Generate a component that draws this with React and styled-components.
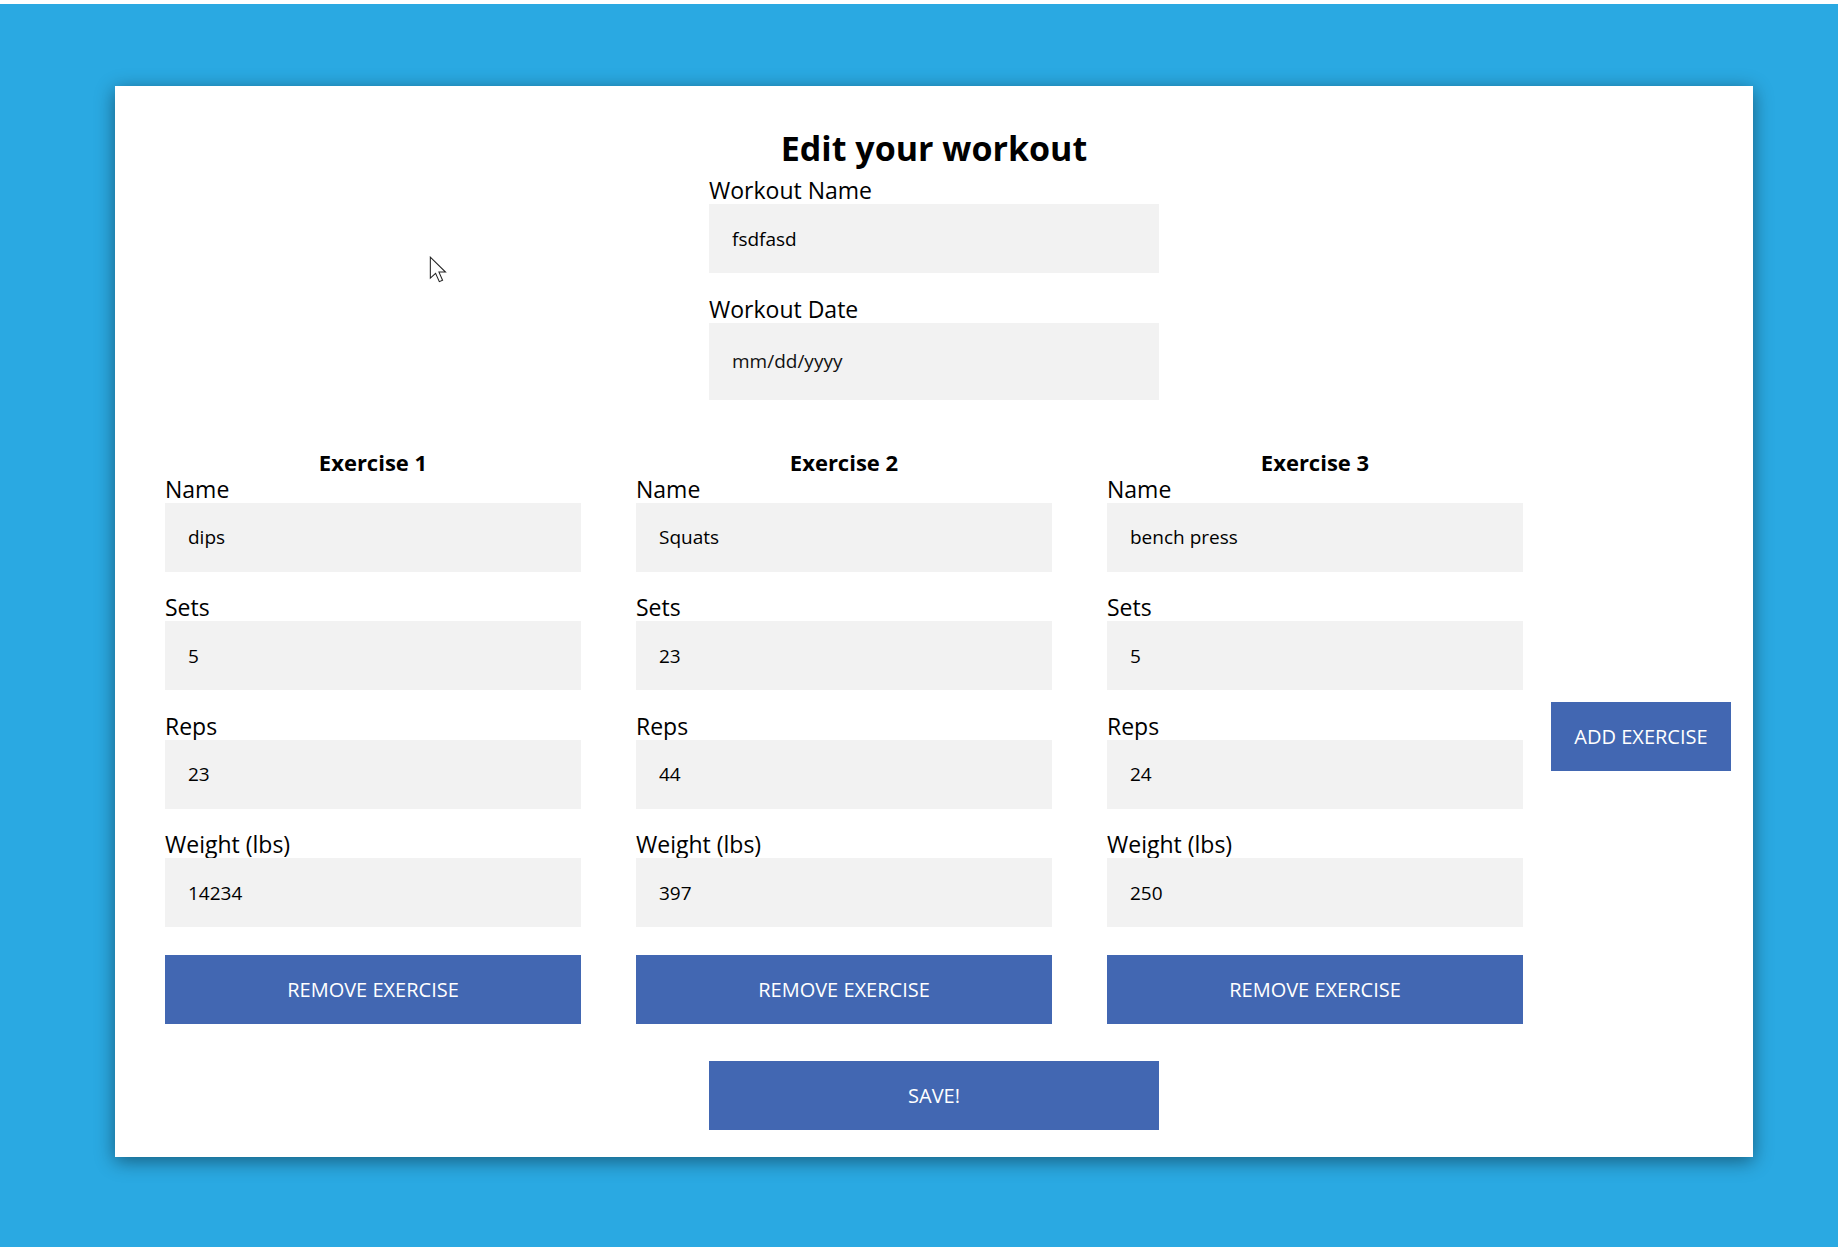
import React from 'react'
import styled, { createGlobalStyle } from 'styled-components'

const GlobalStyle = createGlobalStyle`
  html, body {
    margin: 0;
    padding: 0;
    background: #ffffff;
  }
  body {
    font-family: 'Open Sans', 'Noto Sans', 'Liberation Sans', sans-serif;
    color: #000;
  }
  * {
    box-sizing: border-box;
  }
`

const Backdrop = styled.div`
  margin-top: 4px;
  min-height: 1243px;
  background: #2aa9e2;
  padding: 82px 85px 60px 115px;
`

const Card = styled.div`
  position: relative;
  background: #fff;
  box-shadow: 0 4px 18px rgba(0, 0, 0, 0.45);
  padding: 39px 0 27px;
  display: flex;
  flex-direction: column;
  align-items: center;
`

const Title = styled.h1`
  margin: 0;
  font-size: 34px;
  line-height: 47px;
  font-weight: 700;
  text-align: center;
`

const WorkoutForm = styled.div`
  width: 450px;
  margin-top: 4px;
  display: flex;
  flex-direction: column;
`

const Field = styled.label`
  display: flex;
  flex-direction: column;
  & + & {
    margin-top: 21.5px;
  }
`

const LabelText = styled.span`
  font-size: 23px;
  line-height: 28px;
  font-weight: 400;
`

const TextInput = styled.input`
  height: ${p => p.$tall ? 77 : 69}px;
  width: 100%;
  border: none;
  outline: none;
  background: #f2f2f2;
  padding: 0 23px;
  font-family: inherit;
  font-size: 19px;
  color: #000;
  &::placeholder {
    color: #111;
    opacity: 1;
  }
`

const ExerciseRow = styled.div`
  align-self: stretch;
  margin-top: 50px;
  padding: 0 22px 0 50px;
  display: flex;
  align-items: center;
`

const ExerciseGrid = styled.div`
  display: grid;
  grid-template-columns: repeat(3, 416px);
  column-gap: 55px;
`

const ExerciseColumn = styled.div`
  display: flex;
  flex-direction: column;
`

const ExerciseTitle = styled.h3`
  margin: 0;
  font-size: 22px;
  line-height: 25px;
  font-weight: 700;
  text-align: center;
`

const Button = styled.button`
  height: 69px;
  border: none;
  background: #4267b2;
  color: #fff;
  font-family: inherit;
  font-size: 20px;
  text-transform: uppercase;
  cursor: pointer;
  width: ${p => p.$width || '100%'};
  padding: 0;
  white-space: nowrap;
`

const RemoveButton = styled(Button)`
  margin-top: 28px;
`

const AddButton = styled(Button)`
  margin-left: 28px;
  flex: none;
`

const SaveButton = styled(Button)`
  margin-top: 37px;
`

const Pointer = styled.svg`
  position: absolute;
  left: 314px;
  top: 170px;
`

const exercises = [
  { name: 'dips', sets: 5, reps: 23, weight: 14234 },
  { name: 'Squats', sets: 23, reps: 44, weight: 397 },
  { name: 'bench press', sets: 5, reps: 24, weight: 250 }
]

const Exercise = ({ index, ex }) => (
  <ExerciseColumn>
    <ExerciseTitle>Exercise {index + 1}</ExerciseTitle>
    <Field>
      <LabelText>Name</LabelText>
      <TextInput defaultValue={ex.name} />
    </Field>
    <Field>
      <LabelText>Sets</LabelText>
      <TextInput defaultValue={ex.sets} />
    </Field>
    <Field>
      <LabelText>Reps</LabelText>
      <TextInput defaultValue={ex.reps} />
    </Field>
    <Field>
      <LabelText>Weight (lbs)</LabelText>
      <TextInput defaultValue={ex.weight} />
    </Field>
    <RemoveButton>Remove Exercise</RemoveButton>
  </ExerciseColumn>
)

export default function App() {
  return (
    <>
      <GlobalStyle />
      <Backdrop>
        <Card>
          <Title>Edit your workout</Title>
          <WorkoutForm>
            <Field>
              <LabelText>Workout Name</LabelText>
              <TextInput defaultValue="fsdfasd" />
            </Field>
            <Field>
              <LabelText>Workout Date</LabelText>
              <TextInput $tall placeholder="mm/dd/yyyy" />
            </Field>
          </WorkoutForm>
          <ExerciseRow>
            <ExerciseGrid>
              {exercises.map((ex, i) => (
                <Exercise key={i} index={i} ex={ex} />
              ))}
            </ExerciseGrid>
            <AddButton $width="180px">Add Exercise</AddButton>
          </ExerciseRow>
          <SaveButton $width="450px">Save!</SaveButton>
          <Pointer width="19" height="28" viewBox="0 0 16 24">
            <path
              d="M1 1v18l4.5-4.2 3.2 7.2 2.8-1.2-3.1-7H14z"
              fill="#fff"
              stroke="#222"
              strokeWidth="0.9"
              strokeLinejoin="miter"
            />
          </Pointer>
        </Card>
      </Backdrop>
    </>
  )
}
